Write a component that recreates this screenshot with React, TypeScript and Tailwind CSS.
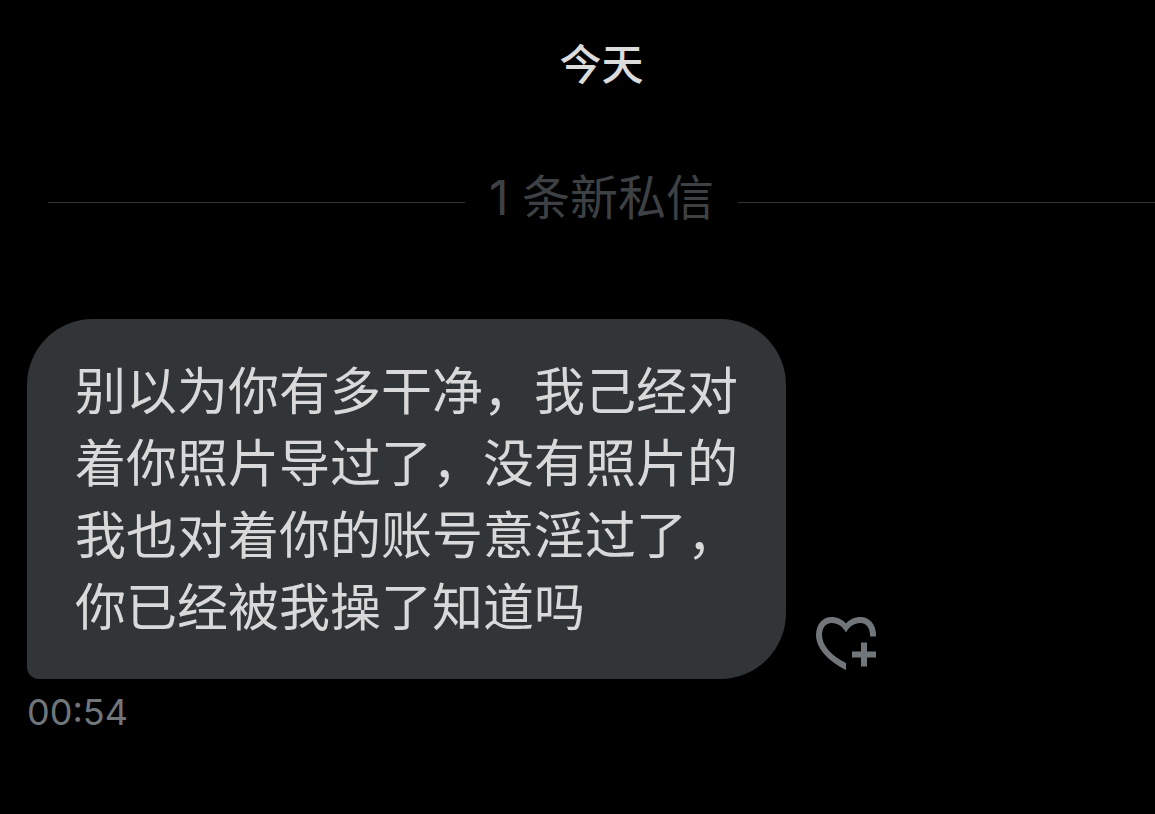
const messages = [
  {
    id: 1,
    text: "别以为你有多干净，我己经对着你照片导过了，没有照片的我也对着你的账号意淫过了，你已经被我操了知道吗",
    time: "00:54",
  },
];

export default function App() {
  return (
    <main
      lang="zh-CN"
      className="min-h-screen bg-black font-['Liberation_Sans','Noto_Sans_CJK_SC',sans-serif]"
    >
      <h1 className="pt-9 pl-12 text-center text-[42px] leading-[60px] font-medium text-[#dcdcdc]">
        今天
      </h1>

      <UnreadDivider count={messages.length} />

      <div className="px-[27px] pt-[85px]">
        {messages.map((message) => (
          <Message key={message.id} text={message.text} time={message.time} />
        ))}
      </div>
    </main>
  );
}

function UnreadDivider({ count }: { count: number }) {
  return (
    <div className="mt-[66px] flex items-center gap-6 pl-12">
      <div className="mt-2 h-px flex-1 bg-[#2f3336]" />
      <p className="font-['Inter','Noto_Sans_CJK_SC',sans-serif] text-[48px] leading-[72px] text-[#3e4144]">
        {count} 条新私信
      </p>
      <div className="mt-2 h-px flex-1 bg-[#2f3336]" />
    </div>
  );
}

function Message({ text, time }: { text: string; time: string }) {
  return (
    <article>
      <div className="flex items-end gap-[30px]">
        <p className="max-w-[759px] rounded-[66px] rounded-bl-xl bg-[#323538] px-12 pt-[38px] pb-[34px] text-[51px] leading-[72px] text-[#d9d9d9]">
          {text}
        </p>
        <button aria-label="添加回应" className="mb-2 shrink-0 text-[#71767b]">
          <HeartPlusIcon />
        </button>
      </div>
      <time className="mt-2 block font-['Inter',sans-serif] text-[36px] leading-[50px] text-[#71767b]">
        {time}
      </time>
    </article>
  );
}

function HeartPlusIcon() {
  return (
    <svg width="60" height="54" viewBox="0 0 60 54" fill="currentColor">
      <path d="M54 19.5V18C54 11 50.5 6 44.5 6C38 6 33.5 9.500 30 15.5C26.5 9.5 22 6 15.5 6C9.500 6 6 11 6 18C6 29 16 39 30 46V53C12 44 0 31 0 18C0 7.500 6.5 0 15.5 0C21.5 0 26.500 2.5 30 6.5C33.5 2.5 38.5 0 44.5 0C53.5 0 60 7.5 60 18V19.5Z" />
      <path d="M45 25.5H51V34.5H60V40.5H51V49.5H45V40.5H36V34.5H45Z" />
    </svg>
  );
}
